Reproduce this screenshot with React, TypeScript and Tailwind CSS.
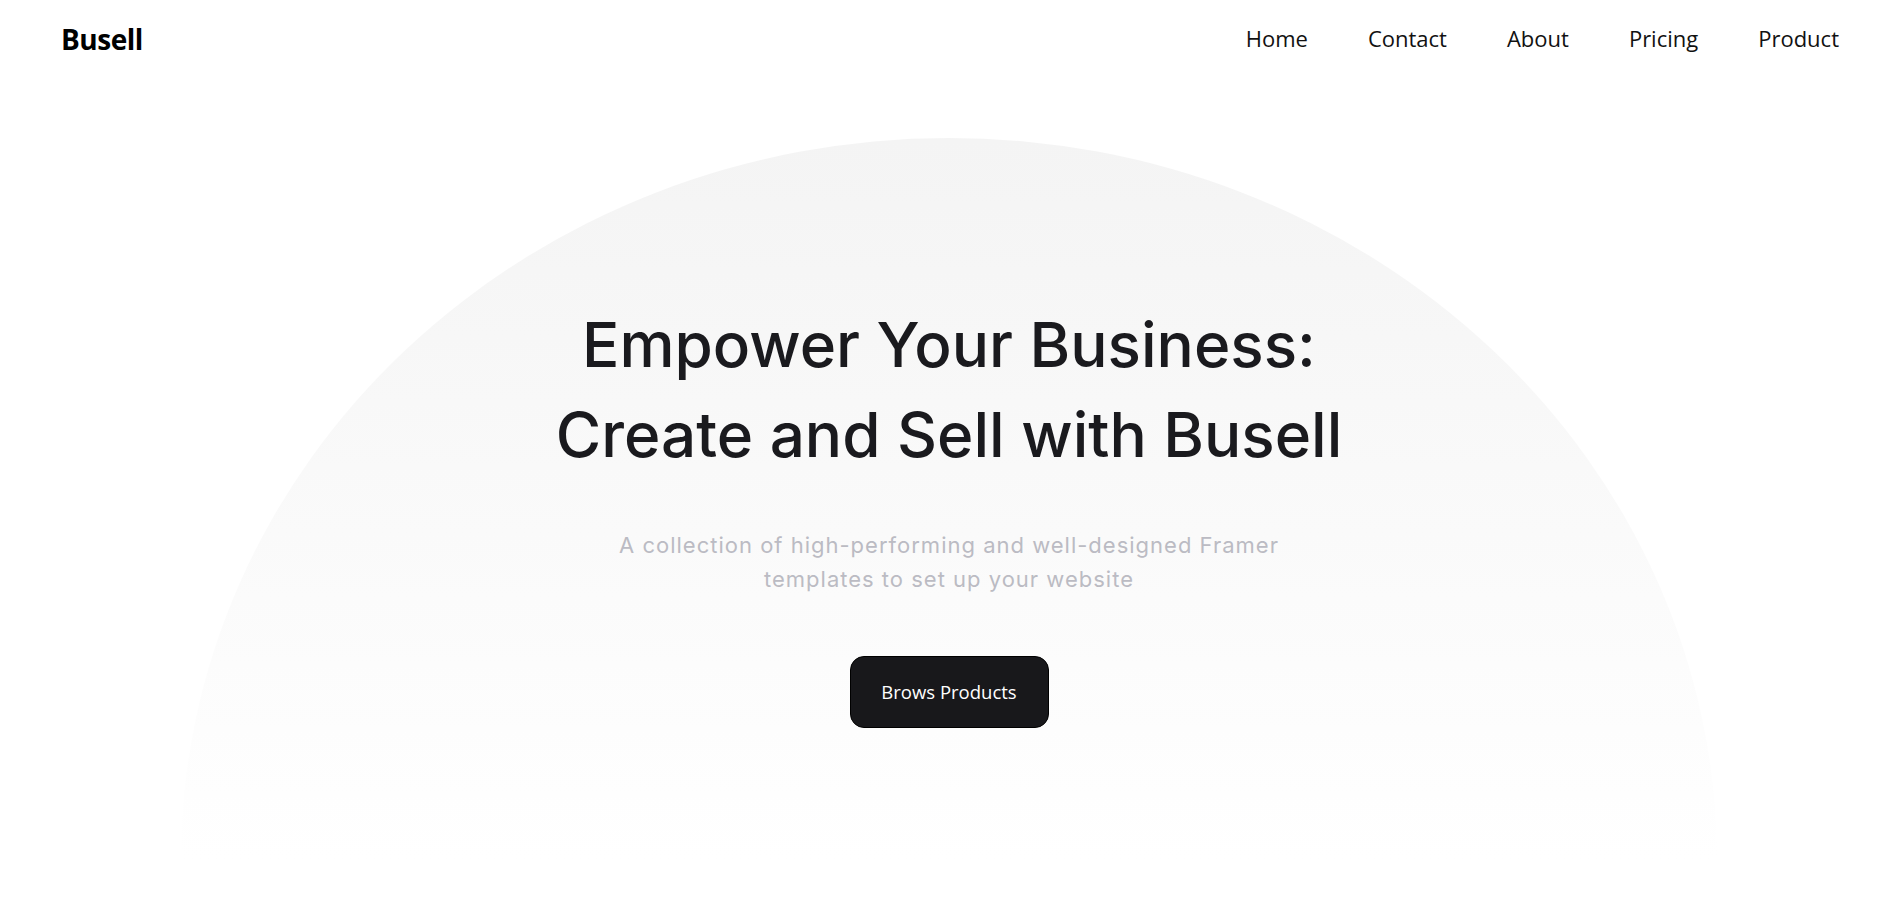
import React from "react";

const navItems = ["Home", "Contact", "About", "Pricing", "Product"];

export default function App() {
  return (
    <div className="min-h-[906px] w-full bg-white" style={{ fontFamily: '"Open Sans", "Noto Sans", sans-serif' }}>
      <header className="flex h-[77px] items-center justify-between pl-[61px] pr-[48px]">
        <div className="text-[28px] font-bold tracking-[-0.5px] text-black">Busell</div>
        <nav className="flex items-center gap-[60px]">
          {navItems.map((item) => (
            <a key={item} href="#" className="text-[22px] text-[#111]">
              {item}
            </a>
          ))}
        </nav>
      </header>

      <section className="relative h-[783px] overflow-hidden">
        <div className="absolute left-[calc(50%+5px)] top-[61px] h-[1444px] w-[1536px] -translate-x-1/2 rounded-[50%] bg-linear-to-b from-[#f4f4f4] to-white to-50%" />
        <div className="relative flex flex-col items-center pl-[11px] pt-[223px]">
          <h1
            className="text-center text-[62px] font-medium leading-[90px] text-[#1a1a1e]"
            style={{ fontFamily: 'Inter, "Noto Sans", sans-serif' }}
          >
            Empower Your Business:
            <br />
            Create and Sell with Busell
          </h1>
          <p
            className="mt-[48px] text-center text-[22px] leading-[34px] tracking-[1px] text-[#bbbbc3]"
            style={{ fontFamily: 'Inter, "Noto Sans", sans-serif' }}
          >
            A collection of high-performing and well-designed Framer
            <br />
            templates to set up your website
          </p>
          <button className="mt-[60px] flex h-[72px] w-[199px] items-center justify-center rounded-[14px] border border-black bg-[#18181b] text-[18.5px] text-white">
            Brows Products
          </button>
        </div>
      </section>
    </div>
  );
}
